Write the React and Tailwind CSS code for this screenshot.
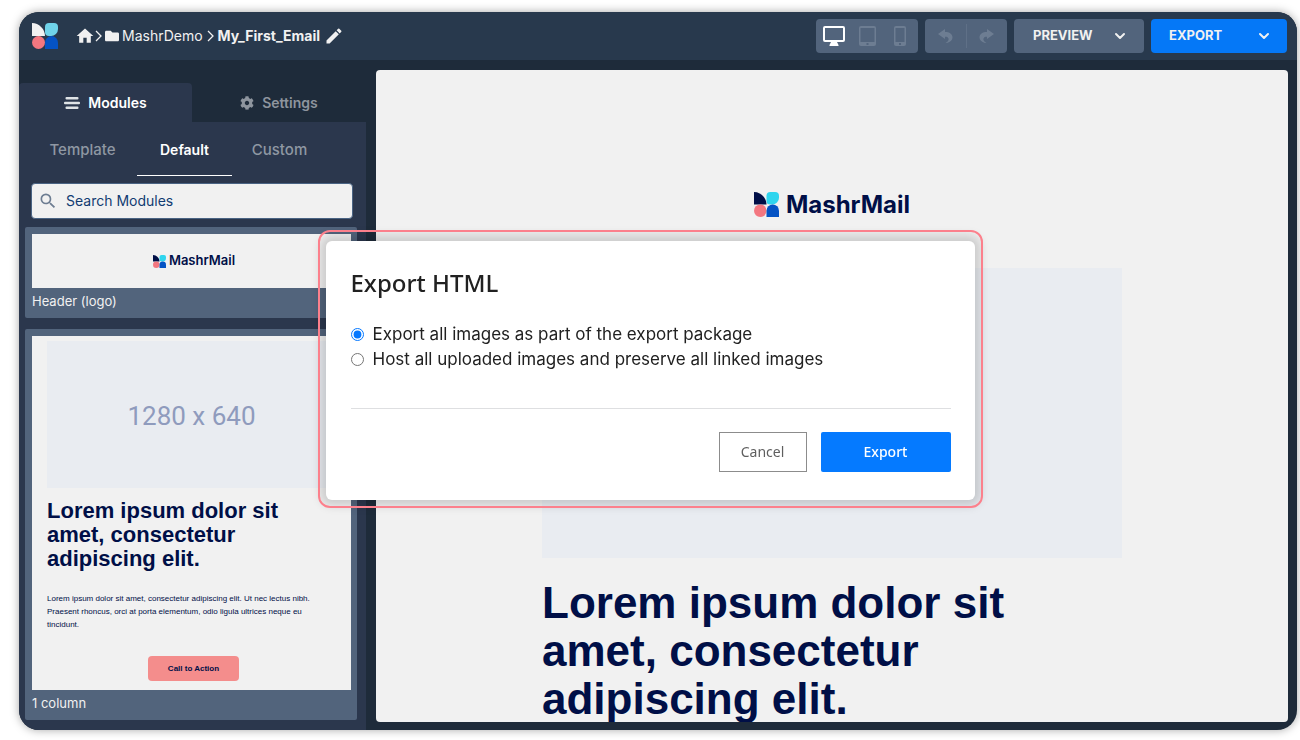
import React from 'react';
import { FaFolder, FaCog } from 'react-icons/fa';
import { MdEdit, MdSearch, MdHome } from 'react-icons/md';
import { FiChevronDown } from 'react-icons/fi';

function LogoMark({ className, leaf, sky = '#6fd3ea' }) {
    return (
        <svg className={className} viewBox="0 0 26 26" aria-hidden="true">
            <path d="M0 0C7 0 13 6 13 13H0Z" fill={leaf} />
            <path d="M17 0h5a4 4 0 0 1 4 4v2a7 7 0 0 1-7 7h-2a4 4 0 0 1-4-4V4a4 4 0 0 1 4-4Z" fill={sky} />
            <circle cx="6.5" cy="19.5" r="6.5" fill="#f37780" />
            <path d="M13 26V19.500a6.500 6.500 0 0 1 13 0V26Z" fill="#0553c4" />
        </svg>
    );
}

function CrumbArrow({ className }) {
    return (
        <svg className={className} width="7" height="12" viewBox="0 0 7 12" fill="none" stroke="currentColor" strokeWidth="1.3" aria-hidden="true">
            <path d="M1 1l5 5-5 5" />
        </svg>
    );
}

function DesktopIcon() {
    return (
        <svg width="22" height="20" viewBox="0 0 22 20" aria-hidden="true">
            <path fillRule="evenodd" d="M2 0h18a2 2 0 0 1 2 2v12a2 2 0 0 1-2 2h-6l1.500 3v1h-9v-1l1.500-3H2a2 2 0 0 1-2-2V2a2 2 0 0 1 2-2Zm0 2v12h18V2Z" fill="currentColor" />
        </svg>
    );
}

function TabletIcon() {
    return (
        <svg width="17" height="20" viewBox="0 0 17 20" aria-hidden="true">
            <path fillRule="evenodd" d="M2 0h13a2 2 0 0 1 2 2v16a2 2 0 0 1-2 2H2a2 2 0 0 1-2-2V2a2 2 0 0 1 2-2Zm-.500 2v14h14V2Zm6 15v2h2v-2Z" fill="currentColor" />
        </svg>
    );
}

function PhoneIcon() {
    return (
        <svg width="12" height="20" viewBox="0 0 12 20" aria-hidden="true">
            <path fillRule="evenodd" d="M2 0h8a2 2 0 0 1 2 2v16a2 2 0 0 1-2 2H2a2 2 0 0 1-2-2V2a2 2 0 0 1 2-2Zm-.500 2v14h9V2ZM5 17v2h2v-2Z" fill="currentColor" />
        </svg>
    );
}

function UndoIcon({ className }) {
    return (
        <svg className={className} width="15" height="14" viewBox="0 0 15 14" aria-hidden="true">
            <path d="M0 5L7 0v3C11.500 3 14.500 5 14.500 8.500c0 2.500-2 4.500-5.500 5.500H7.500c2.500-1.500 3.500-3 3-4.500C10 8.200 9 7.800 7 7.800V10Z" fill="currentColor" />
        </svg>
    );
}

function ModulesIcon() {
    return (
        <svg width="16" height="12" viewBox="0 0 16 12" fill="#dfe3e6" aria-hidden="true">
            <rect x="1.5" y="0" width="13" height="2.6" rx="1" />
            <rect x="0" y="4.7" width="16" height="2.6" rx="1" />
            <rect x="1.5" y="9.4" width="13" height="2.6" rx="1" />
        </svg>
    );
}

function TopBar() {
    return (
        <header className="flex h-12 shrink-0 items-center justify-between bg-[#28394d] pr-[10px] pl-[13px] text-[#f1f1f1]">
            <div className="flex items-center">
                <LogoMark className="size-[26px]" leaf="#f1f1f1" />
                <nav className="ml-[17px] flex items-center text-sm">
                    <a href="#home" aria-label="Home"><MdHome className="size-5" /></a>
                    <CrumbArrow className="mr-[3px]" />
                    <a href="#demo" className="flex items-center gap-[3px]">
                        <FaFolder className="size-[14px]" />
                        MashrDemo
                    </a>
                    <CrumbArrow className="mx-1" />
                    <span className="font-bold">My_First_Email</span>
                    <button type="button" aria-label="Rename" className="ml-1"><MdEdit className="size-5" /></button>
                </nav>
            </div>

            <div className="flex items-center gap-[7px]">
                <div className="flex h-[34px] w-[102px] items-center rounded bg-[#52647c] pl-[7px] text-[#6d7d92]">
                    <button type="button" aria-label="Desktop" className="text-white"><DesktopIcon /></button>
                    <button type="button" aria-label="Tablet" className="ml-[14px]"><TabletIcon /></button>
                    <button type="button" aria-label="Phone" className="ml-[18px]"><PhoneIcon /></button>
                </div>
                <div className="flex h-[34px] w-[82px] items-center rounded bg-[#52647c] text-[#6d7d92]">
                    <button type="button" aria-label="Undo" className="flex flex-1 justify-center"><UndoIcon /></button>
                    <div className="h-6 w-px bg-[#5f7087]"></div>
                    <button type="button" aria-label="Redo" className="flex flex-1 justify-center"><UndoIcon className="-scale-x-100" /></button>
                </div>
                <button type="button" className="flex h-[34px] w-[130px] items-center justify-between rounded bg-[#52647c] pr-4 pl-[19px] text-[13px] font-bold">
                    PREVIEW
                    <FiChevronDown className="size-4" strokeWidth={3} />
                </button>
                <button type="button" className="flex h-[34px] w-[136px] items-center justify-between rounded bg-[#0578f7] pr-[15px] pl-[18px] text-[13px] font-bold">
                    EXPORT
                    <FiChevronDown className="size-4" strokeWidth={3} />
                </button>
            </div>
        </header>
    );
}

function ModuleCard({ label, children }) {
    return (
        <article className="rounded-xs bg-[#52647c] pt-[7px] pr-[6px] pl-[7px]">
            <div className="bg-[#f1f1f1] text-[#000f47]">{children}</div>
            <p className="h-[30px] pt-1 text-[13px] leading-[18px] text-[#f1f1f1]">{label}</p>
        </article>
    );
}

function Sidebar() {
    return (
        <aside className="flex w-[347px] shrink-0 flex-col pt-[23px]">
            <div className="flex h-[39px] shrink-0 text-sm font-semibold">
                <button type="button" className="flex w-[173px] items-center justify-center gap-2 rounded-t bg-[#2b374d] pt-px text-white">
                    <ModulesIcon />
                    Modules
                </button>
                <button type="button" className="flex flex-1 items-center justify-center gap-2 pt-px text-[#8e959e]">
                    <FaCog className="size-[14px]" />
                    Settings
                </button>
            </div>

            <div className="flex-1 bg-[#2b374d] pr-[9px] pl-[6px]">
                <div className="flex h-[54px] pl-[3px] text-[15px] font-medium text-[#8f97a3]">
                    <button type="button" className="w-[109px] pt-[3px]">Template</button>
                    <button type="button" className="w-[95px] border-b border-white pt-[3px] text-sm font-semibold text-white">Default</button>
                    <button type="button" className="w-[95px] pt-[3px]">Custom</button>
                </div>

                <label className="mt-[7px] mr-1 mb-2 ml-[6px] flex h-9 items-center gap-2 rounded border border-[#4a6484] bg-[#f1f1f1] px-[6px]">
                    <MdSearch className="size-5 text-[#6d7d92]" />
                    <input
                        type="text"
                        aria-label="Search Modules"
                        placeholder="Search Modules"
                        className="min-w-0 flex-1 text-sm text-[#123c72] outline-none placeholder:text-[#123c72]"
                    />
                </label>

                <div className="flex flex-col gap-[11px]">
                    <ModuleCard label="Header (logo)">
                        <div className="flex h-[54px] items-center justify-center gap-[3px] pl-[5px] text-[13px] font-semibold">
                            <LogoMark className="size-[13px]" leaf="#000f47" sky="#2fd5ee" />
                            MashrMail
                        </div>
                    </ModuleCard>

                    <ModuleCard label="1 column">
                        <div className="pt-[5px] pr-[11px] pb-[9px] pl-[15px] font-['Liberation_Sans',sans-serif]">
                            <div className="flex h-[147px] items-center justify-center bg-[#e9ecf1] pt-1 pr-1 font-['Roboto',sans-serif] text-[26px] text-[#8f9bbd]">
                                1280 x 640
                            </div>
                            <h3 className="mt-[11px] text-[22px] leading-6 font-bold">
                                Lorem ipsum dolor sit amet, consectetur adipiscing elit.
                            </h3>
                            <p className="mt-[21px] pr-4 text-[8px] leading-[13px]">
                                Lorem ipsum dolor sit amet, consectetur adipiscing elit. Ut nec lectus nibh. Praesent rhoncus, orci at porta elementum, odio ligula ultrices neque eu tincidunt.
                            </p>
                            <button type="button" className="mx-auto mt-[25px] block h-[25px] w-[91px] rounded bg-[#f48d8c] text-[8px] font-bold">
                                Call to Action
                            </button>
                        </div>
                    </ModuleCard>
                </div>
            </div>
        </aside>
    );
}

function EmailCanvas() {
    return (
        <main className="mt-[10px] mr-[9px] mb-2 ml-[10px] flex-1 overflow-hidden rounded bg-[#f1f1f1] text-[#000f47]">
            <div className="mx-auto w-[580px]">
                <div className="flex h-[198px] items-end justify-center gap-[7px] pb-[47px] text-2xl font-bold">
                    <LogoMark className="mb-1 size-[25px]" leaf="#000f47" sky="#2fd5ee" />
                    MashrMail
                </div>
                <div className="h-[290px] bg-[#e9ecf1]"></div>
                <h1 className="mt-[21px] font-['Liberation_Sans',sans-serif] text-[44px] leading-[48px] font-bold">
                    Lorem ipsum dolor sit amet, consectetur adipiscing elit.
                </h1>
            </div>
        </main>
    );
}

function ExportDialog() {
    const [mode, setMode] = React.useState('package');

    return (
        <div className="fixed inset-0 flex items-center justify-center pb-0.5">
            <div className="rounded-[10px] px-[6px] pt-[9px] pb-[6px] outline-2 outline-[#fc808c]">
                <div role="dialog" aria-labelledby="export-title" className="w-[649px] rounded-md bg-white pt-6 pr-6 pb-7 pl-[25px] text-[#212121] shadow-[0_0_10px_6px_rgba(0,0,0,0.15)]">
                    <h2 id="export-title" className="font-['Noto_Sans',sans-serif] text-2xl leading-9 font-medium">Export HTML</h2>
                    <div className="mt-[21px] mb-9 flex flex-col text-[17px]">
                        <label className="flex h-[25px] items-center gap-[9px]">
                            <input type="radio" name="mode" className="size-[13px] accent-[#0578ff]" checked={mode === 'package'} onChange={() => setMode('package')} />
                            Export all images as part of the export package
                        </label>
                        <label className="flex h-[25px] items-center gap-[9px]">
                            <input type="radio" name="mode" className="size-[13px] accent-[#0578ff]" checked={mode === 'host'} onChange={() => setMode('host')} />
                            Host all uploaded images and preserve all linked images
                        </label>
                    </div>
                    <div className="flex justify-end gap-[14px] border-t border-[#dedfe1] pt-[23px] font-['Noto_Sans',sans-serif] text-sm">
                        <button type="button" className="h-10 w-[88px] border border-[#8c8c8c] text-[#5f5f5f]">Cancel</button>
                        <button type="button" className="h-10 w-[130px] rounded-xs bg-[#057aff] font-medium text-white">Export</button>
                    </div>
                </div>
            </div>
        </div>
    );
}

function App() {
    return (
        <div className="h-screen bg-white pt-3 pr-[3px] pb-[10px] pl-[19px] font-['Inter',sans-serif]">
            <div className="flex h-full flex-col overflow-hidden rounded-[20px] bg-[#1e2b3a] shadow-[0_0_10px_rgba(0,0,0,0.35)]">
                <TopBar />
                <div className="flex min-h-0 flex-1">
                    <Sidebar />
                    <EmailCanvas />
                </div>
            </div>
            <ExportDialog />
        </div>
    );
}

export default App;
